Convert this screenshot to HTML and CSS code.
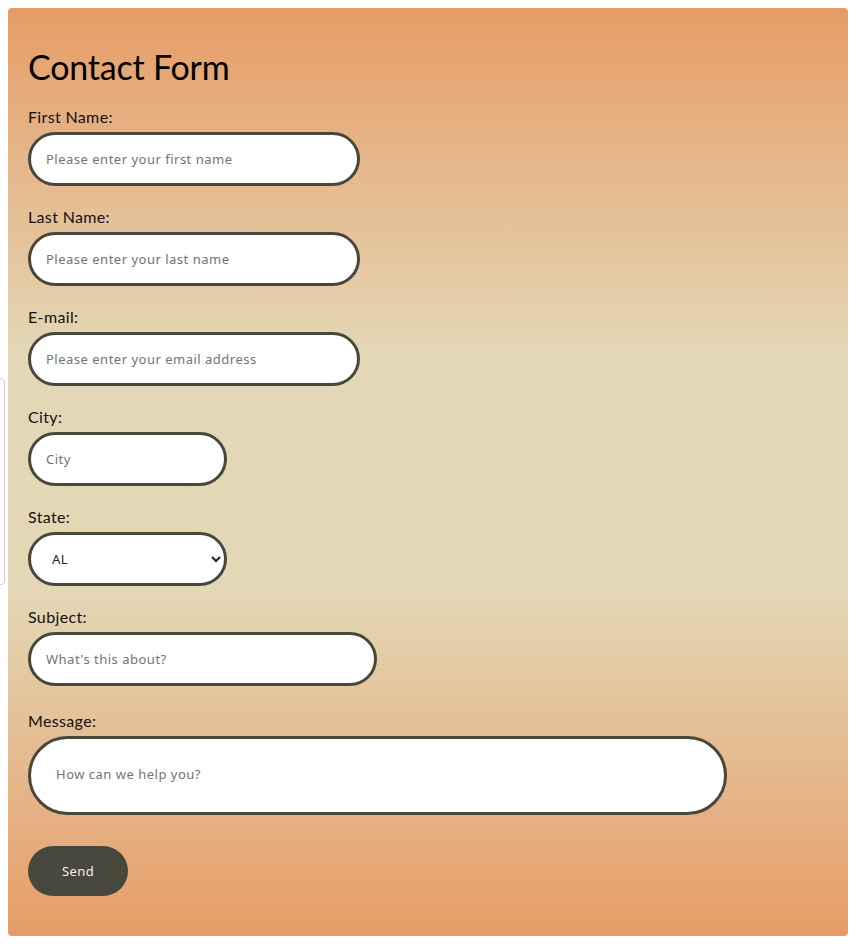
FILE: index.html
```html
<!DOCTYPE html>
<html lang="en">
<head>
<meta charset="utf-8">
<title>Contact Form</title>
<link rel="stylesheet" href="styles.css">
</head>
<body>
<div class="side-panel"></div>
<form class="card">
  <h1 class="title">Contact Form</h1>
  <div class="field">
    <label class="label" for="fn">First Name:</label>
    <input class="control w-md" id="fn" type="text" placeholder="Please enter your first name">
  </div>
  <div class="field">
    <label class="label" for="ln">Last Name:</label>
    <input class="control w-md" id="ln" type="text" placeholder="Please enter your last name">
  </div>
  <div class="field">
    <label class="label" for="em">E-mail:</label>
    <input class="control w-md" id="em" type="email" placeholder="Please enter your email address">
  </div>
  <div class="field">
    <label class="label" for="city">City:</label>
    <input class="control w-sm" id="city" type="text" placeholder="City">
  </div>
  <div class="field">
    <label class="label" for="state">State:</label>
    <select class="control select w-sm" id="state">
      <option>AL</option>
      <option>AK</option>
      <option>AZ</option>
    </select>
  </div>
  <div class="field">
    <label class="label" for="subj">Subject:</label>
    <input class="control w-lg" id="subj" type="text" placeholder="What's this about?">
  </div>
  <div class="field field-msg">
    <label class="label" for="msg">Message:</label>
    <textarea class="control textarea" id="msg" placeholder="How can we help you?"></textarea>
  </div>
  <button class="send" type="button">Send</button>
</form>
</body>
</html>
```

FILE: styles.css
```css
html, body {
  margin: 0;
  padding: 0;
  background: #ffffff;
}

body {
  padding: 8px;
  position: relative;
  font-family: "Lato", "Liberation Sans", sans-serif;
}

.side-panel {
  position: absolute;
  left: -200px;
  top: 378px;
  width: 203px;
  height: 205px;
  border: 1px solid #cfcfcf;
  border-radius: 4px;
  background: #ffffff;
}

.card {
  width: 840px;
  box-sizing: border-box;
  padding: 20px 20px 40px;
  border-radius: 4px;
  background: linear-gradient(180deg, #e79c66 0%, #e3d7b5 37%, #e3d7b5 63%, #e79c66 100%);
}

.title {
  margin: 19px 0 20px;
  font-size: 34px;
  font-weight: 400;
  line-height: 40px;
  letter-spacing: -0.2px;
  color: #000;
}

.field {
  display: flex;
  flex-direction: column;
  align-items: flex-start;
  margin-bottom: 21px;
}

.field-msg {
  padding-top: 4px;
  margin-bottom: 31px;
}

.label {
  font-size: 16px;
  line-height: 20px;
  letter-spacing: 0.35px;
  color: #111;
  margin-bottom: 5px;
}

.control {
  box-sizing: border-box;
  height: 54px;
  border: 3px solid #47473b;
  border-radius: 27px;
  background: #fff;
  padding: 0 15px;
  font-family: "Noto Sans", "Open Sans", sans-serif;
  font-size: 13px;
  letter-spacing: 0.5px;
  color: #222;
  outline: none;
}

.control::placeholder {
  color: #707478;
}

.w-md { width: 332px; }
.w-sm { width: 199px; }
.w-lg { width: 349px; }

.select {
  padding: 0 8px 0 17px;
  color: #222;
}

.textarea {
  width: 699px;
  height: 79px;
  border-radius: 40px;
  padding: 26px 25px;
  resize: none;
}

.send {
  width: 100px;
  height: 50px;
  border: none;
  border-radius: 25px;
  background: #48473b;
  color: #f4f1e6;
  font-family: "Noto Sans", "Open Sans", sans-serif;
  font-size: 13px;
  letter-spacing: 0.4px;
  cursor: pointer;
}
```
